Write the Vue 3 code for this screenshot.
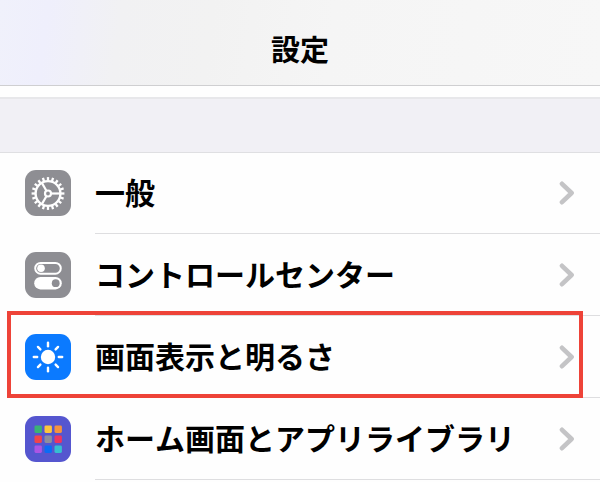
<script setup>
const rows = [
  { id: 'general', label: '一般' },
  { id: 'control', label: 'コントロールセンター' },
  { id: 'display', label: '画面表示と明るさ', marked: true },
  { id: 'home', label: 'ホーム画面とアプリライブラリ' },
]

const teeth = Array.from({ length: 20 }, (_, i) => i * 18)
const spokes = [0, 120, 240]
const rays = Array.from({ length: 8 }, (_, i) => i * 45)
const tiles = [
  '#3bb273', '#fcc63c', '#f5923e',
  '#f0444c', '#8e8e9c', '#ee3560',
  '#ab55e4', '#0a6cf5', '#36bfd0',
].map((color, i) => ({ color, x: 9.5 + (i % 3) * 10, y: 9.5 + Math.floor(i / 3) * 10 }))
</script>

<template>
  <main class="screen">
    <header class="bar">
      <h1 class="title">設定</h1>
    </header>
    <div class="band"></div>
    <nav class="list" aria-label="設定">
      <a v-for="row in rows" :key="row.id" :href="'#' + row.id" class="row" :class="{ marked: row.marked }">
        <span class="icon" :class="row.id">
          <svg viewBox="0 0 46 46" aria-hidden="true">
            <g v-if="row.id === 'general'" fill="none" stroke="#fff">
              <circle cx="23" cy="23.5" r="12.4" stroke-width="2.4" />
              <circle cx="23" cy="23.5" r="3" stroke-width="2.2" />
              <path v-for="a in teeth" :key="a" d="M36 23.5H39.4" stroke-width="2.3" :transform="`rotate(${a} 23 23.5)`" />
              <path v-for="a in spokes" :key="'s' + a" d="M26.5 23.5H35" stroke-width="2.2" :transform="`rotate(${a} 23 23.5)`" />
            </g>
            <g v-else-if="row.id === 'control'">
              <rect x="10.2" y="10.9" width="25.6" height="10.8" rx="5.4" fill="none" stroke="#fff" stroke-width="2" />
              <circle cx="16" cy="16.3" r="3.8" fill="#fff" />
              <rect x="9.2" y="25" width="27.6" height="12.4" rx="6.2" fill="#fff" />
              <circle cx="30.7" cy="31.2" r="3.9" fill="#8e8e93" />
            </g>
            <g v-else-if="row.id === 'display'">
              <circle cx="23" cy="23" r="7.2" fill="#fff" />
              <path v-for="a in rays" :key="a" d="M33.8 23H37.2" stroke="#fff" stroke-width="2.4" stroke-linecap="round" :transform="`rotate(${a} 23 23)`" />
            </g>
            <g v-else>
              <rect v-for="t in tiles" :key="t.color" :x="t.x" :y="t.y" width="7.4" height="7.4" rx="1.3" :fill="t.color" />
            </g>
          </svg>
        </span>
        <span class="body">
          <span class="label">{{ row.label }}</span>
          <svg class="chevron" viewBox="0 0 16 24" aria-hidden="true">
            <path d="M3 2.8L12.6 12L3 21.2" fill="none" stroke="#c4c4c6" stroke-width="4.6" stroke-linecap="round" stroke-linejoin="round" />
          </svg>
        </span>
      </a>
    </nav>
  </main>
</template>

<style>
body {
  margin: 0;
  background: #fefefe;
}
</style>

<style scoped>
.screen {
  font-family: "Noto Sans CJK JP", sans-serif;
  font-kerning: none;
  color: #000;
}
.bar {
  box-sizing: border-box;
  height: 86px;
  padding-top: 13px;
  border-bottom: 1px solid #cfcfd1;
  background: linear-gradient(97deg, #f0f1fb 0%, #efeffc 8%, #f1f1f3 20%, #f2f2f2 35%, #f5f5f5 55%, #f7f7f7 100%);
  text-align: center;
}
.title {
  margin: 0;
  font-size: 29px;
  line-height: 70px;
  font-weight: 700;
}
.band {
  box-sizing: border-box;
  height: 55px;
  margin-top: 11px;
  border-top: 2px solid #e7e7ea;
  background: #f1f0f5;
}
.list {
  box-shadow: inset 0 1px #dfdfe2;
}
.row {
  position: relative;
  display: flex;
  align-items: center;
  gap: 24px;
  height: 82px;
  padding-left: 25px;
  color: inherit;
  text-decoration: none;
}
.marked::after {
  content: "";
  position: absolute;
  inset: -5px 17px 0 7px;
  border: 4px solid #ee4338;
}
.icon {
  flex: none;
  width: 46px;
  height: 46px;
  border-radius: 11px;
  background: #8e8e93;
}
.icon svg {
  display: block;
}
.icon.display {
  background: #0b7aff;
}
.icon.home {
  background: #5556cf;
}
.body {
  box-sizing: border-box;
  flex: 1;
  display: flex;
  align-items: center;
  justify-content: space-between;
  height: 100%;
  padding-right: 25px;
  border-bottom: 1px solid #dedee0;
}
.label {
  padding-bottom: 4px;
  font-size: 30px;
  line-height: 40px;
  font-weight: 700;
  white-space: nowrap;
}
.chevron {
  flex: none;
  width: 16px;
  height: 24px;
}
</style>
